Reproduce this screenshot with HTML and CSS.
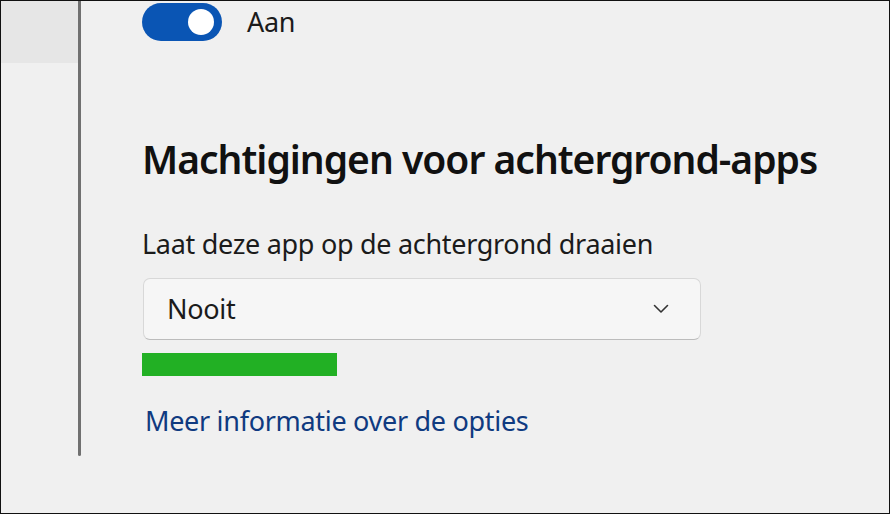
FILE: index.html
```html
<!DOCTYPE html>
<html>
<head>
    <link rel="stylesheet" href="styles.css">
</head>
<body>
    <div class="frame">
        <div class="nav">
            <div class="nav-item"></div>
        </div>
        <div class="divider"></div>

        <div class="content">
            <div class="toggle-row">
                <div class="toggle"><span class="knob"></span></div>
                <span class="toggle-label">Aan</span>
            </div>

            <h2 class="heading">Machtigingen voor achtergrond-apps</h2>

            <div class="field-label">Laat deze app op de achtergrond draaien</div>

            <div class="select">
                <span>Nooit</span>
                <svg class="chevron" width="16" height="10" viewBox="0 0 16 10">
                    <path d="M1.5 1.5 L8 8 L14.5 1.5" fill="none" stroke="#333" stroke-width="1.6" stroke-linecap="round" stroke-linejoin="round"/>
                </svg>
            </div>

            <div class="highlight"></div>

            <a class="more-link" href="#">Meer informatie over de opties</a>
        </div>
    </div>
</body>
</html>
```

FILE: styles.css
```css
/* Settings page - background app permissions */
body {
    margin: 0;
    font-family: "Noto Sans", "Open Sans", sans-serif;
    color: #1b1b1b;
}

.frame {
    box-sizing: border-box;
    width: 890px;
    height: 514px;
    border: 1px solid #111;
    background: #f0f0f0;
    display: flex;
    align-items: flex-start;
}

.nav {
    width: 77px;
}

.nav-item {
    height: 62px;
    background: #e6e6e6;
}

.divider {
    width: 3px;
    height: 455px;
    background: #707070;
    border-radius: 0 0 2px 2px;
}

.content {
    margin-left: 61px;
    display: flex;
    flex-direction: column;
    align-items: flex-start;
    letter-spacing: -0.3px;
}

.toggle-row {
    display: flex;
    align-items: center;
    margin-top: 2px;
}

.toggle {
    position: relative;
    width: 80px;
    height: 38px;
    border-radius: 19px;
    background: #0a55b4;
}

.knob {
    position: absolute;
    top: 6px;
    right: 8px;
    width: 26px;
    height: 26px;
    border-radius: 50%;
    background: #fff;
}

.toggle-label {
    margin-left: 25px;
    font-size: 27px;
    line-height: 36px;
}

.heading {
    margin: 93px 0 0;
    font-size: 39px;
    line-height: 49px;
    font-weight: 600;
    letter-spacing: -1px;
    color: #111;
}

.field-label {
    margin-top: 43px;
    font-size: 27px;
    line-height: 36px;
}

.select {
    box-sizing: border-box;
    margin-top: 16px;
    margin-left: 1px;
    width: 558px;
    height: 62px;
    padding: 0 31px 0 23px;
    display: flex;
    align-items: center;
    justify-content: space-between;
    background: #f6f6f6;
    border: 1px solid #d8d8d8;
    border-bottom-color: #bcbcbc;
    border-radius: 7px;
    font-size: 27px;
    line-height: 36px;
}

.highlight {
    margin-top: 13px;
    width: 195px;
    height: 23px;
    background: #22b024;
}

.more-link {
    margin-top: 27px;
    margin-left: 3px;
    font-size: 27px;
    line-height: 36px;
    color: #0f3a80;
    text-decoration: none;
}
```
